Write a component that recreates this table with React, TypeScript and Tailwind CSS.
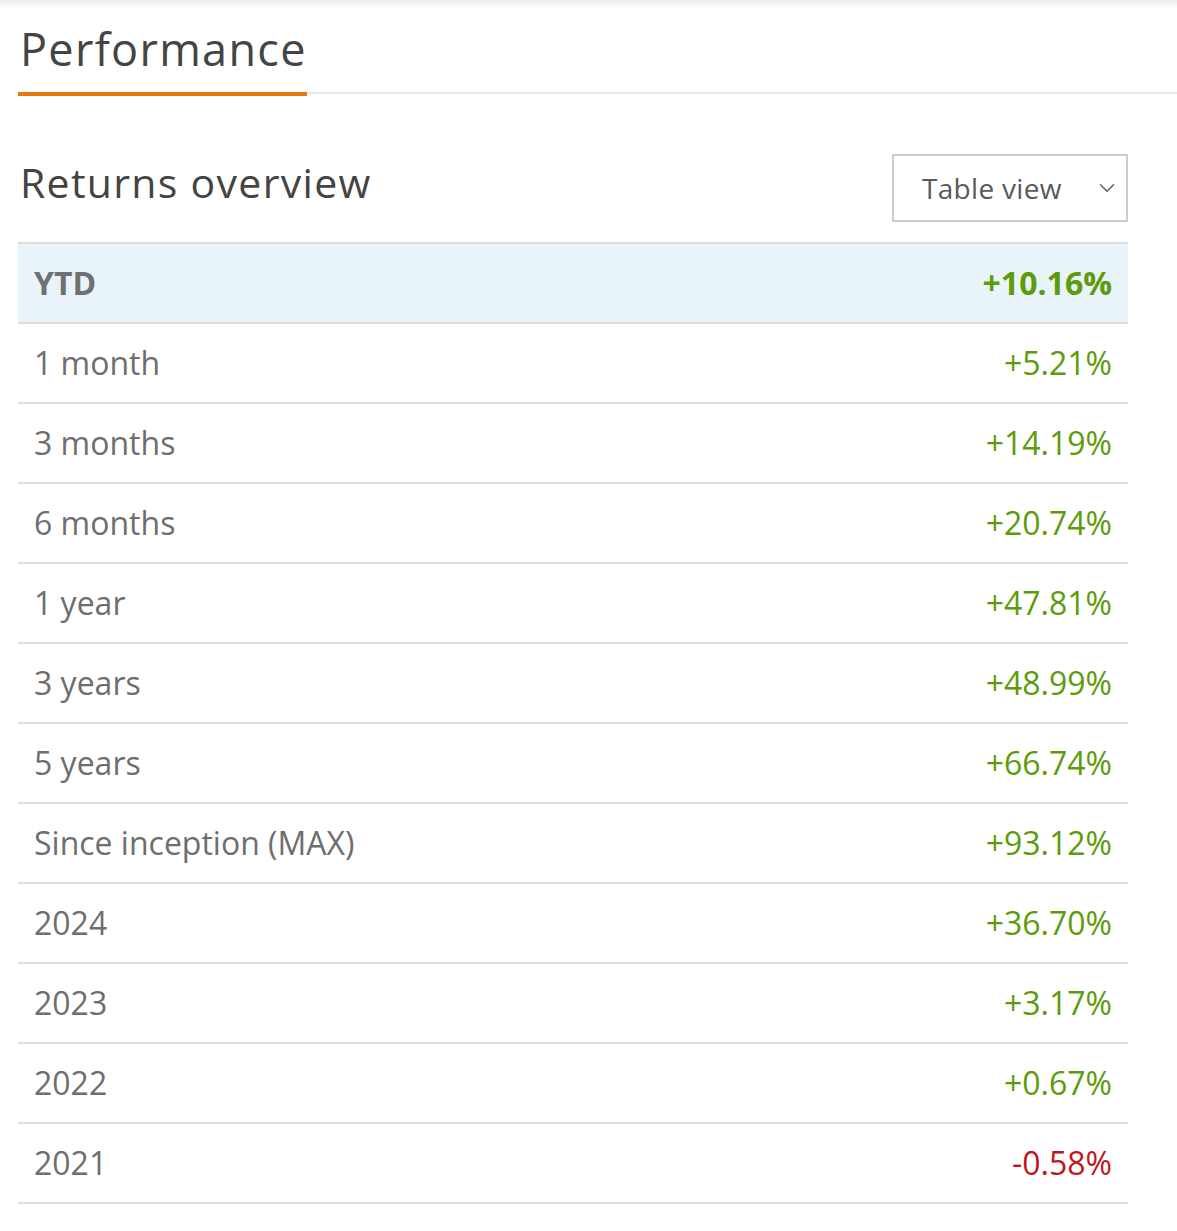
import { ChevronDown } from "lucide-react";

const rows: { label: string; value: string }[] = [
    { label: "YTD", value: "+10.16%" },
    { label: "1 month", value: "+5.21%" },
    { label: "3 months", value: "+14.19%" },
    { label: "6 months", value: "+20.74%" },
    { label: "1 year", value: "+47.81%" },
    { label: "3 years", value: "+48.99%" },
    { label: "5 years", value: "+66.74%" },
    { label: "Since inception (MAX)", value: "+93.12%" },
    { label: "2024", value: "+36.70%" },
    { label: "2023", value: "+3.17%" },
    { label: "2022", value: "+0.67%" },
    { label: "2021", value: "-0.58%" },
];

export default function App() {
    return (
        <div className="min-h-[1231px] bg-white font-['Open_Sans',sans-serif]">
            <div className="h-[8px] bg-gradient-to-b from-[#ececec] to-white" />

            <div className="pl-[18px]">
                <div className="border-b-2 border-[#e6e8eb] pt-[11px]">
                    <h1 className="inline-block -mb-[4px] border-b-4 border-[#e8780c] pb-[13px] pl-[2px] text-[45px] leading-[60px] tracking-[1.3px] text-[#444444]">Performance</h1>
                </div>
            </div>

            <div className="pl-[18px] pr-[49px]">
                <div className="mt-[60px] mb-[20px] flex items-start justify-between">
                    <h2 className="mt-[1px] pl-[2px] text-[41px] leading-[54px] tracking-[1.3px] text-[#444444]">Returns overview</h2>
                    <button type="button" className="flex h-[68px] w-[236px] items-center justify-between border-2 border-[#cccccc] bg-white pl-[28px] pr-[6px] text-[28px] tracking-[0.3px] text-[#5a5a5a]">
                        <span>Table view</span>
                        <ChevronDown className="h-[26px] w-[26px] text-[#666666]" strokeWidth={1.5} />
                    </button>
                </div>

                <div className="border-t-2 border-[#dddddd]">
                    {rows.map((row, i) => {
                        const first = i === 0;
                        const negative = row.value.startsWith("-");
                        return (
                            <div key={row.label} className={"flex h-[80px] items-center justify-between border-b-2 border-[#dddddd] px-[16px] text-[32px] " + (first ? "bg-[#e8f3fa] font-bold" : "")}>
                                <span className={first ? "text-[#707070]" : "text-[#6e6e6e]"}>{row.label}</span>
                                <span className={negative ? "text-[#c0161b]" : "text-[#5b9c0a]"}>{row.value}</span>
                            </div>
                        );
                    })}
                </div>
            </div>
        </div>
    );
}
